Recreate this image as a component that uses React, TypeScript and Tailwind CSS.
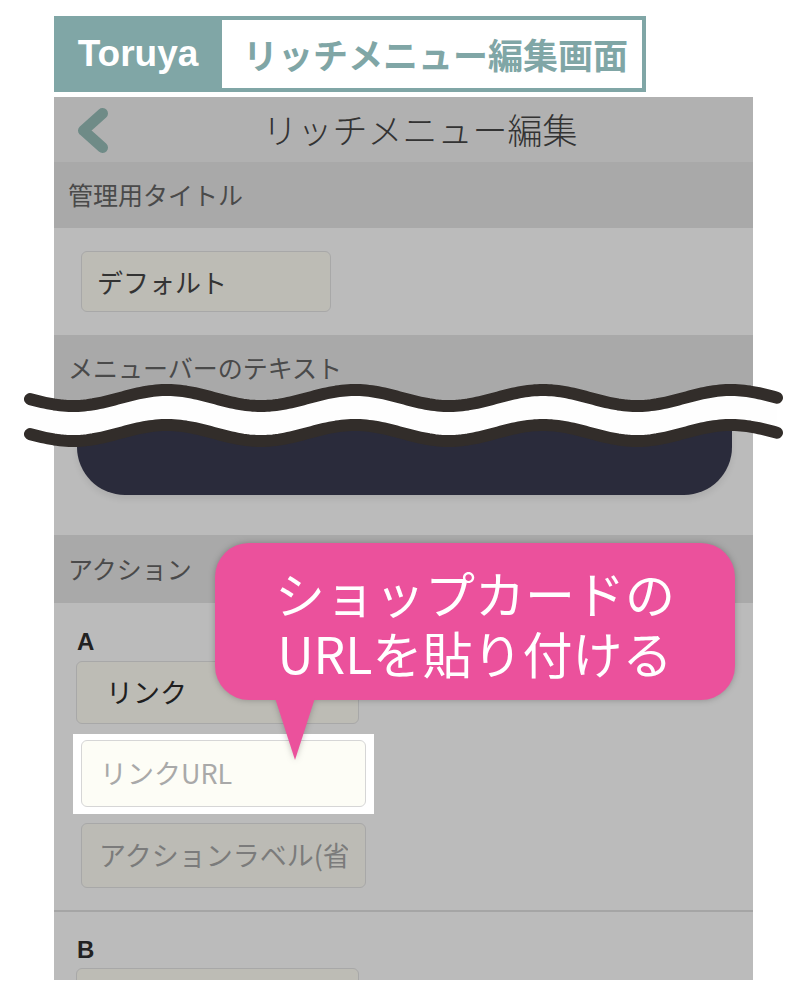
import React from "react";

function wavePts(off: number): string[] {
  const a: string[] = [];
  for (let x = 30; x <= 777; x += 3) {
    const y = 28 + off - 8 * Math.sin((2 * Math.PI * (x - 120)) / 188);
    a.push(`${x},${y.toFixed(2)}`);
  }
  return a;
}

const topPts = wavePts(0);
const botPts = wavePts(35);
const topPath = "M " + topPts.join(" L ");
const botPath = "M " + botPts.join(" L ");
const fillPath =
  "M " + topPts.join(" L ") + " L " + [...botPts].reverse().join(" L ") + " Z";

function SectionHeader({ label, h }: { label: string; h: string }) {
  return (
    <div className={`${h} bg-[#a9a9a9] flex items-center pl-[14px] text-[25px] text-[#4a4a4a]`}>
      {label}
    </div>
  );
}

export default function App() {
  return (
    <div className="relative w-[808px] h-[1002px] bg-white overflow-hidden font-['Noto_Sans_CJK_JP',sans-serif]">
      <div className="pt-[16px] pl-[54px]">
        {/* Banner */}
        <div className="flex h-[76px] w-[592px] bg-[#80a6a6]">
          <div className="w-[168px] flex items-center justify-center text-white font-bold text-[37px] font-['Liberation_Sans',sans-serif]">
            Toruya
          </div>
          <div className="flex-1 my-[4px] mr-[4px] bg-white flex items-center pl-[21px] text-[#80a6a6] font-bold text-[35px]">
            リッチメニュー編集画面
          </div>
        </div>

        {/* Phone */}
        <div className="mt-[5px] w-[699px] h-[883px] bg-[#bbbbbb] overflow-hidden">
          {/* Nav bar */}
          <div className="relative h-[65px] bg-[#b1b1b1] flex items-center justify-center pl-[33px]">
            <svg
              className="absolute left-[22px] top-[7px]"
              width="40"
              height="52"
              viewBox="0 0 40 52"
            >
              <polyline
                points="26.5,9.5 7.5,26.5 26.5,43.5"
                fill="none"
                stroke="#6f8b87"
                strokeWidth="11"
                strokeLinecap="round"
                strokeLinejoin="round"
              />
            </svg>
            <span className="text-[35px] font-light text-[#333333]">リッチメニュー編集</span>
          </div>

          <SectionHeader label="管理用タイトル" h="h-[66px]" />
          <div className="h-[107px] pl-[27px] pt-[23px]">
            <div className="w-[250px] h-[61px] rounded-[6px] border border-[#a8a8a8] bg-[#bdbcb5] flex items-center pl-[15px] text-[26px] text-[#333333]">
              デフォルト
            </div>
          </div>

          <SectionHeader label="メニューバーのテキスト" h="h-[66px]" />
          <div className="h-[134px] pl-[23px] pr-[21px]">
            <div className="h-[94px] rounded-b-[48px] bg-[#2a2b3b] shadow-[0_4px_6px_rgba(0,0,0,0.08)]" />
          </div>

          <SectionHeader label="アクション" h="h-[68px]" />
          <div className="h-[309px] pt-[27px] border-b-2 border-[#a5a5a5]">
            <div className="pl-[23px] h-[24px] leading-[24px] text-[24px] font-bold text-[#222222] font-['Liberation_Sans',sans-serif]">
              A
            </div>
            <div className="mt-[7px] ml-[22px] w-[283px] h-[63px] rounded-[6px] border border-[#a8a8a8] bg-[#bdbcb5] flex items-center pl-[29px] text-[27px] text-[#1f1f1f]">
              リンク
            </div>
            <div className="mt-[10px] ml-[19px] w-[301px] h-[80px] bg-white pt-[6px] pl-[8px]">
              <div className="w-[285px] h-[67px] rounded-[6px] border border-[#d6d6d6] bg-[#fdfdf6] flex items-center pl-[18px] text-[27px] text-[#a9a9a9]">
                リンクURL
              </div>
            </div>
            <div className="mt-[9px] ml-[27px] w-[285px] h-[65px] rounded-[6px] border border-[#a8a8a8] bg-[#bcbbb5] flex items-center px-[17px] text-[27px] text-[#7b7b7b]">
              <span className="block w-full overflow-hidden whitespace-nowrap">
                アクションラベル(省略可)
              </span>
            </div>
          </div>

          <div className="pt-[26px]">
            <div className="pl-[23px] h-[24px] leading-[24px] text-[24px] font-bold text-[#222222] font-['Liberation_Sans',sans-serif]">
              B
            </div>
            <div className="mt-[6px] ml-[22px] w-[283px] h-[63px] rounded-[6px] border border-[#a8a8a8] bg-[#bdbcb5]" />
          </div>
        </div>
      </div>

      {/* Wave break overlay */}
      <svg
        className="absolute left-0 top-[370px]"
        width="808"
        height="90"
        viewBox="0 0 808 90"
      >
        <path d={fillPath} fill="#fefefe" />
        <path d={topPath} fill="none" stroke="#322d2a" strokeWidth="12" strokeLinecap="round" strokeLinejoin="round" />
        <path d={botPath} fill="none" stroke="#322d2a" strokeWidth="12" strokeLinecap="round" strokeLinejoin="round" />
      </svg>

      {/* Callout bubble */}
      <div className="absolute left-[215px] top-[543px] drop-shadow-[0_0_3px_rgba(0,0,0,0.25)]">
        <div className="relative w-[520px] h-[157px] rounded-[34px] bg-[#eb519c] flex flex-col items-center justify-center text-white text-[50px] leading-[60px]">
          <div>ショップカードの</div>
          <div>URLを貼り付ける</div>
        </div>
        <svg className="absolute left-[58px] top-[155px]" width="44" height="63" viewBox="0 0 44 63">
          <polygon points="2,0 42,0 22,62" fill="#eb519c" />
        </svg>
      </div>
    </div>
  );
}
